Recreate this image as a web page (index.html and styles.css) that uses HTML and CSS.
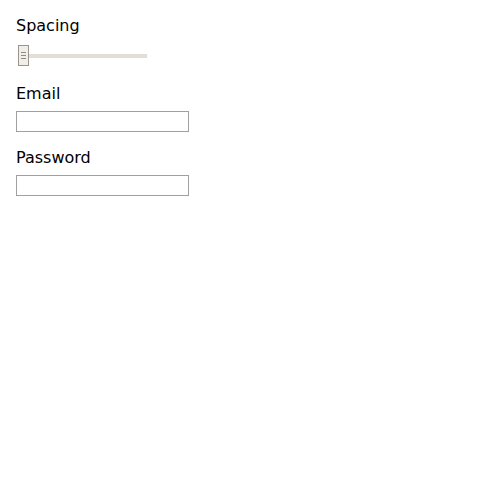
FILE: index.html
```html
<!DOCTYPE html>
<html>
<head>
<meta charset="utf-8">
<link rel="stylesheet" href="styles.css">
</head>
<body>
<form class="form">
  <div class="field">
    <label class="label">Spacing</label>
    <div class="slider">
      <div class="thumb"><span></span><span></span><span></span></div>
      <div class="track"></div>
    </div>
  </div>
  <div class="field">
    <label class="label label-input">Email</label>
    <input class="input" type="text">
  </div>
  <div class="field">
    <label class="label label-input">Password</label>
    <input class="input" type="password">
  </div>
</form>
</body>
</html>
```
FILE: styles.css
```css
html, body {
  margin: 0;
  padding: 0;
  background: #fff;
}
body {
  padding: 16px;
  font-family: "DejaVu Sans", sans-serif;
  font-size: 16px;
  color: #000;
}
.form {
  display: flex;
  flex-direction: column;
}
.field {
  display: flex;
  flex-direction: column;
  align-items: flex-start;
}
.label {
  display: block;
  line-height: 19px;
  height: 19px;
}
.slider {
  display: flex;
  align-items: center;
  margin: 10px 0 18px 2px;
  height: 21px;
}
.thumb {
  box-sizing: border-box;
  width: 11px;
  height: 21px;
  border: 1px solid #9a948c;
  background: #f1eee9;
  display: flex;
  flex-direction: column;
  justify-content: center;
  align-items: center;
  gap: 2px;
}
.thumb span {
  display: block;
  width: 5px;
  height: 1px;
  background: #8f8a83;
}
.track {
  width: 118px;
  height: 4px;
  background: #e2ded8;
}
.label-input {
  margin-bottom: 8px;
}
.input {
  box-sizing: border-box;
  width: 173px;
  height: 21px;
  margin: 0 0 16px 0;
  padding: 0;
  border: 1px solid #a0a0a0;
  border-radius: 0;
  background: #fff;
  outline: none;
}
```
